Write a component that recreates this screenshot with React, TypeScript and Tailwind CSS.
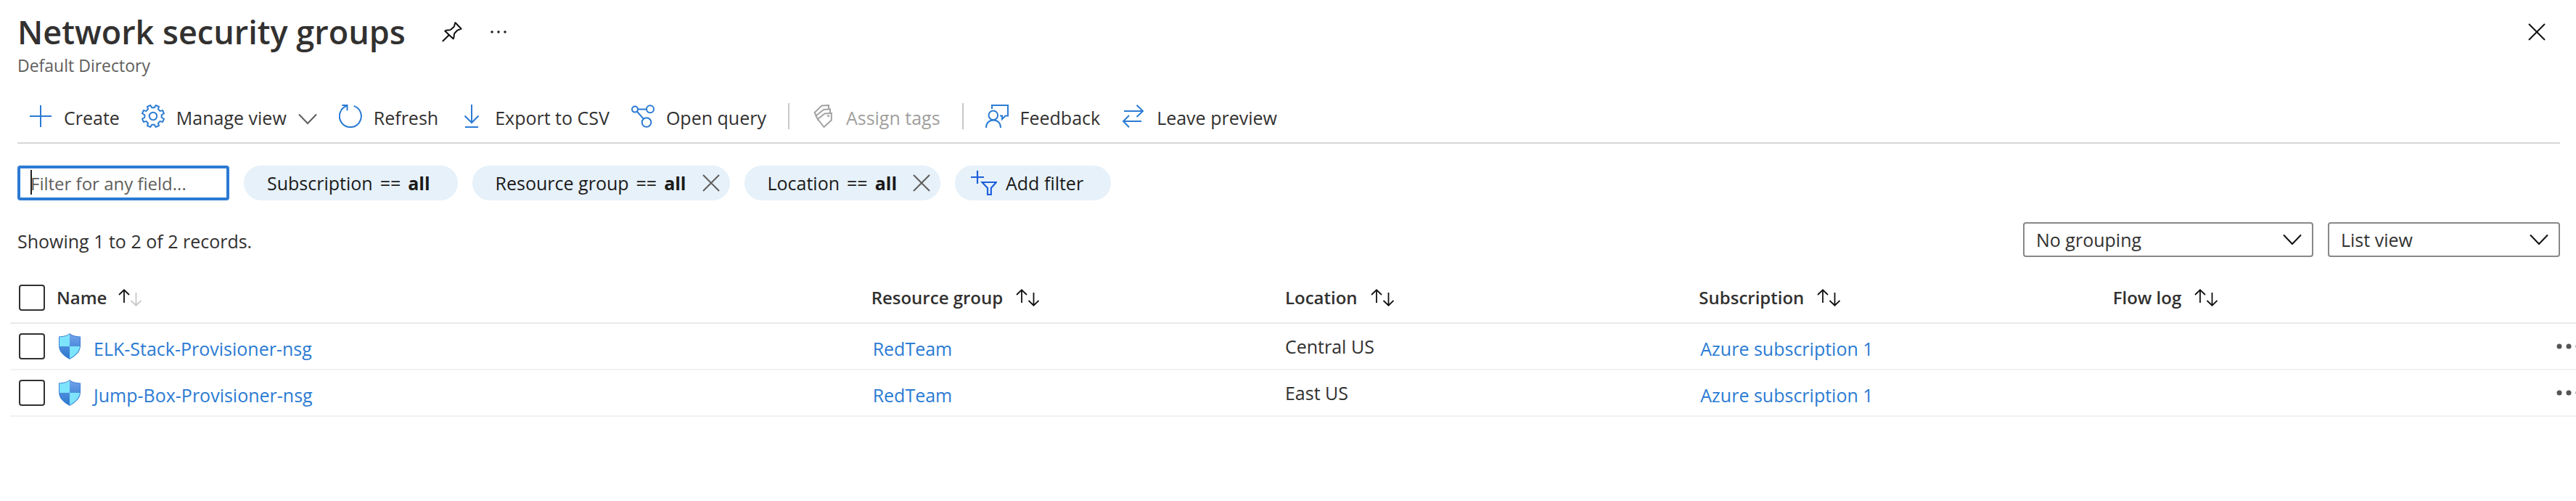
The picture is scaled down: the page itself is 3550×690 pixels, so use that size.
import React from "react";

type IconProps = { children: React.ReactNode; className?: string };

function Icon32({ children, className = "text-[#2b7bd3]" }: IconProps) {
  return (
    <svg width="32" height="32" viewBox="0 0 32 32" fill="none" stroke="currentColor" strokeWidth="2" className={`shrink-0 ${className}`} aria-hidden="true">
      {children}
    </svg>
  );
}

const gearPath = (() => {
  const points: string[] = [];
  for (let i = 0; i < 8; i++) {
    const mid = 22.5 + i * 45;
    const corners: [number, number][] = [[mid - 14, 11.8], [mid - 8.5, 15.4], [mid + 8.5, 15.4], [mid + 14, 11.8]];
    corners.forEach(([deg, r]) => {
      const a = (deg * Math.PI) / 180;
      points.push(`${(16 + r * Math.sin(a)).toFixed(2)} ${(16 - r * Math.cos(a)).toFixed(2)}`);
    });
  }
  return `M${points.join("L")}Z`;
})();

const PlusIcon = () => <Icon32><path d="M16 1V31M1 16H31" /></Icon32>;
const GearIcon = () => <Icon32><path d={gearPath} /><circle cx="16" cy="16" r="5.2" /></Icon32>;
const RefreshIcon = () => <Icon32><path d="M20.7 1.9A15 15 0 1 1 11.3 1.8" /><path d="M4.3 1H11.5V8.2" /></Icon32>;
const DownloadIcon = () => <Icon32><path d="M16 0V24M6.5 15.5L16 25L25.5 15.5M7 31H25" /></Icon32>;
const QueryIcon = () => (
  <Icon32>
    <circle cx="5" cy="6.6" r="4" /><circle cx="26" cy="6.3" r="5" /><circle cx="21" cy="24.5" r="6.3" />
    <path d="M9 6.5H21M7.8 9.5L16.8 19.7" />
  </Icon32>
);
const TagsIcon = () => (
  <Icon32 className="text-[#a3a3a3]">
    <path d="M18.5 12.5L27.8 11.8V21.5L17.5 31L9 20Z" />
    <path d="M9.8 22L6.5 15.5L17 7L26 6.3V12" />
    <path d="M7.5 17L4.6 11L14.5 1.6L24 1V6.5" />
    <circle cx="23.5" cy="15.6" r="0.6" />
  </Icon32>
);
const FeedbackIcon = () => (
  <Icon32>
    <path d="M9 6V1H31V15.5H27.5L23 20V15.5H20" />
    <circle cx="10.8" cy="14.8" r="6.3" />
    <path d="M1 32C1 25.5 5 21.5 11 21.5S21 25.5 21 32" />
  </Icon32>
);
const SwapIcon = () => (
  <Icon32><path d="M3 9H29.5M20.5 0.8L29 9L20.5 17M27 23H2M10 15L2 23L10 31.2" /></Icon32>
);

function ChevronIcon({ className = "text-[#111]" }: { className?: string }) {
  return (
    <svg width="26" height="16" viewBox="0 0 26 16" fill="none" stroke="currentColor" strokeWidth="2" className={className} aria-hidden="true">
      <path d="M1 1.5L13 14L25 1.5" />
    </svg>
  );
}

function CrossIcon({ className }: { className: string }) {
  return (
    <svg width="24" height="24" viewBox="0 0 24 24" fill="none" stroke="currentColor" strokeWidth="2" className={className} aria-hidden="true">
      <path d="M1 1L23 23M23 1L1 23" />
    </svg>
  );
}

function SortIcon({ ascending }: { ascending?: boolean }) {
  return (
    <svg width="32" height="24" viewBox="0 0 32 24" fill="none" stroke="#111" strokeWidth="1.8" aria-hidden="true">
      <path d="M8 19V1.5M1 8L8 1.3L15 8" />
      <path d="M24.5 5V22.5M17.5 16L24.5 22.7L31.5 16" stroke={ascending ? "#c8c8c8" : "#111"} />
    </svg>
  );
}

function ShieldIcon() {
  return (
    <svg width="30" height="36" viewBox="0 0 30 36" className="block" aria-hidden="true">
      <defs>
        <linearGradient id="shieldBlue" x1="0" y1="0" x2="0" y2="1">
          <stop offset="0" stopColor="#74a3ea" />
          <stop offset="1" stopColor="#2776cd" />
        </linearGradient>
        <clipPath id="shieldInner">
          <path d="M15 1C18.5 4 24 5 29 5.2V17C29 26 20.5 31.5 15 35C9.5 31.5 1 26 1 17V5.2C6 5 11.5 4 15 1Z" />
        </clipPath>
      </defs>
      <path d="M15 0C18.5 3.2 24 4.2 30 4.5V17C30 27 21 32.3 15 36C9 32.3 0 27 0 17V4.5C6 4.2 11.5 3.2 15 0Z" fill="#3a7fd5" />
      <g clipPath="url(#shieldInner)">
        <rect width="30" height="36" fill="url(#shieldBlue)" />
        <path d="M0 0H15V18H0ZM15 18H30V36H15Z" fill="#7de4fc" />
      </g>
    </svg>
  );
}

function ToolButton({ icon, label, disabled, chevron }: { icon: React.ReactNode; label: string; disabled?: boolean; chevron?: boolean }) {
  return (
    <button type="button" disabled={disabled} className="flex items-center gap-4 text-[25px] leading-8 text-[#323130] disabled:text-[#a19f9d]">
      {icon}
      <span className="pt-1">{label}</span>
      {chevron && <span className="pt-2"><ChevronIcon className="text-[#605e5c]" /></span>}
    </button>
  );
}

const Divider = () => <span className="h-9 w-0.5 bg-[#c8c8c8]" />;

function FilterPill({ field, removable }: { field: string; removable?: boolean }) {
  return (
    <div className={`flex h-12 items-center gap-[22px] rounded-full bg-[#e6f1fa] pl-8 ${removable ? "pr-3.5" : "pr-[38px]"}`}>
      <button type="button" className="flex gap-2.5">
        <span>{field}</span>
        <span>==</span>
        <b className="font-bold">all</b>
      </button>
      {removable && (
        <button type="button" aria-label={`Remove ${field} filter`}><CrossIcon className="text-[#605e5c]" /></button>
      )}
    </div>
  );
}

function Dropdown({ label, options, className }: { label: string; options: string[]; className: string }) {
  return (
    <div className={`relative ${className}`}>
      <select aria-label={label} className="h-12 w-full appearance-none rounded-sm border-2 border-[#8a8886] bg-white pr-14 pl-4 text-[25px] text-[#323130]">
        {options.map((o) => <option key={o}>{o}</option>)}
      </select>
      <span className="pointer-events-none absolute inset-y-0 right-4 flex items-center"><ChevronIcon /></span>
    </div>
  );
}

function Tick({ label }: { label: string }) {
  return (
    <input type="checkbox" aria-label={label} className="block size-9 appearance-none rounded border-2 border-[#323130] bg-white checked:bg-[#2b7bd3]" />
  );
}

const columns = ["Resource group", "Location", "Subscription", "Flow log"];

const rows = [
  { name: "ELK-Stack-Provisioner-nsg", group: "RedTeam", location: "Central US", subscription: "Azure subscription 1" },
  { name: "Jump-Box-Provisioner-nsg", group: "RedTeam", location: "East US", subscription: "Azure subscription 1" },
];

export default function App() {
  const cell = "h-16 border-b-2 border-[#f1f1f1] p-0 align-middle";
  const head = "h-[70px] border-b-2 border-[#eaeaea] p-0 text-left align-middle text-2xl leading-8 font-semibold";
  const link = "block pt-1.5 text-[#2b7bd3] hover:underline";
  return (
    <main className="bg-white font-['Open_Sans','Noto_Sans',sans-serif] text-[25px] leading-8 text-[#323130]">
      <header className="flex items-start justify-between pt-3.5 pr-[22px] pl-6">
        <div>
          <div className="flex items-center">
            <h1 className="text-[45px] leading-[60px] font-semibold">Network security groups</h1>
            <button type="button" aria-label="Pin" className="ml-[50px]">
              <svg width="28" height="28" viewBox="0 0 28 28" fill="none" stroke="#111" strokeWidth="2" strokeLinejoin="round">
                <path d="M18.5 1.2L26.7 9.7C24.5 11 22.5 10.5 21 12L17.3 16C16 18 17.5 21 15.7 23.5L4.3 12.7C7 10.5 10 12.3 12 11L16.5 7C18 5 17 3 18.5 1.2Z" />
                <path d="M10 18L0.8 27" />
              </svg>
            </button>
            <button type="button" aria-label="More options" className="ml-9">
              <svg width="28" height="8" viewBox="0 0 28 8" fill="#222"><circle cx="5" cy="4" r="1.8" /><circle cx="14" cy="4" r="1.8" /><circle cx="23" cy="4" r="1.8" /></svg>
            </button>
          </div>
          <p className="text-[23px] leading-8 text-[#605e5c]">Default Directory</p>
        </div>
        <button type="button" aria-label="Close" className="px-5 pt-[18px] pb-5"><CrossIcon className="text-[#111]" /></button>
      </header>

      <div className="pr-[22px] pl-6">
        <nav aria-label="Commands" className="mt-[18px] flex h-[74px] items-center gap-[30px] border-b-2 border-[#d6d6d6] pl-4">
          <ToolButton icon={<PlusIcon />} label="Create" />
          <ToolButton icon={<GearIcon />} label="Manage view" chevron />
          <ToolButton icon={<RefreshIcon />} label="Refresh" />
          <ToolButton icon={<DownloadIcon />} label="Export to CSV" />
          <ToolButton icon={<QueryIcon />} label="Open query" />
          <Divider />
          <ToolButton icon={<TagsIcon />} label="Assign tags" disabled />
          <Divider />
          <ToolButton icon={<FeedbackIcon />} label="Feedback" />
          <ToolButton icon={<SwapIcon />} label="Leave preview" />
        </nav>

        <div className="mt-[30px] flex items-center gap-5 text-[#1b1a19]">
          <div className="relative">
            <input type="text" aria-label="Filter" placeholder="Filter for any field..." className="block h-12 w-[292px] rounded-sm border-4 border-[#2b7bd3] bg-white pl-3.5 text-2xl outline-none placeholder:text-[#605e5c]" />
            <span className="absolute top-1.5 left-[18px] h-[34px] w-0.5 bg-[#222]" />
          </div>
          <FilterPill field="Subscription" />
          <FilterPill field="Resource group" removable />
          <FilterPill field="Location" removable />
          <button type="button" className="flex h-12 items-center gap-3 rounded-full bg-[#e6f1fa] pr-[38px] pl-[22px]">
            <svg width="36" height="34" viewBox="0 0 36 34" fill="none" stroke="#1f5fd9" strokeWidth="2.2" aria-hidden="true">
              <path d="M9 0V18M0 9H18" />
              <path d="M15.5 16H35L27.8 24V33H23V24Z" />
            </svg>
            Add filter
          </button>
        </div>

        <div className="mt-[30px] flex items-center justify-between">
          <p className="pt-1">Showing 1 to 2 of 2 records.</p>
          <div className="flex gap-5">
            <Dropdown label="Grouping" options={["No grouping"]} className="w-[400px]" />
            <Dropdown label="View" options={["List view"]} className="w-80" />
          </div>
        </div>
      </div>

      <div className="mt-[22px] pl-3.5">
        <table className="w-full table-fixed border-separate border-spacing-0">
          <colgroup>
            <col className="w-16" />
            <col />
            <col className="w-[16.13%]" />
            <col className="w-[16.13%]" />
            <col className="w-[16.13%]" />
            <col className="w-[16.13%]" />
            <col className="w-[78px]" />
          </colgroup>
          <thead>
            <tr>
              <th className={head}><div className="pl-3"><Tick label="Select all" /></div></th>
              <th className={head}><button type="button" className="flex items-center gap-4">Name <SortIcon ascending /></button></th>
              {columns.map((c) => (
                <th key={c} className={head}><button type="button" className="flex items-center gap-[18px] pl-2.5">{c} <SortIcon /></button></th>
              ))}
              <th className={head} />
            </tr>
          </thead>
          <tbody>
            {rows.map((r) => (
              <tr key={r.name}>
                <td className={cell}><div className="pl-3"><Tick label={`Select ${r.name}`} /></div></td>
                <td className={cell}>
                  <div className="flex items-center gap-[18px] pl-[3px]"><ShieldIcon /><a href="#" className={link}>{r.name}</a></div>
                </td>
                <td className={cell}><div className="pl-3"><a href="#" className={link}>{r.group}</a></div></td>
                <td className={cell}><div className="pl-2.5">{r.location}</div></td>
                <td className={cell}><div className="pl-3"><a href="#" className={link}>{r.subscription}</a></div></td>
                <td className={cell} />
                <td className={`${cell} overflow-hidden`}>
                  <button type="button" aria-label={`Actions for ${r.name}`} className="ml-12 block">
                    <svg width="36" height="10" viewBox="0 0 36 10" fill="#555"><circle cx="7" cy="5" r="3.5" /><circle cx="20" cy="5" r="3.5" /><circle cx="33" cy="5" r="3.5" /></svg>
                  </button>
                </td>
              </tr>
            ))}
          </tbody>
        </table>
      </div>
    </main>
  );
}
